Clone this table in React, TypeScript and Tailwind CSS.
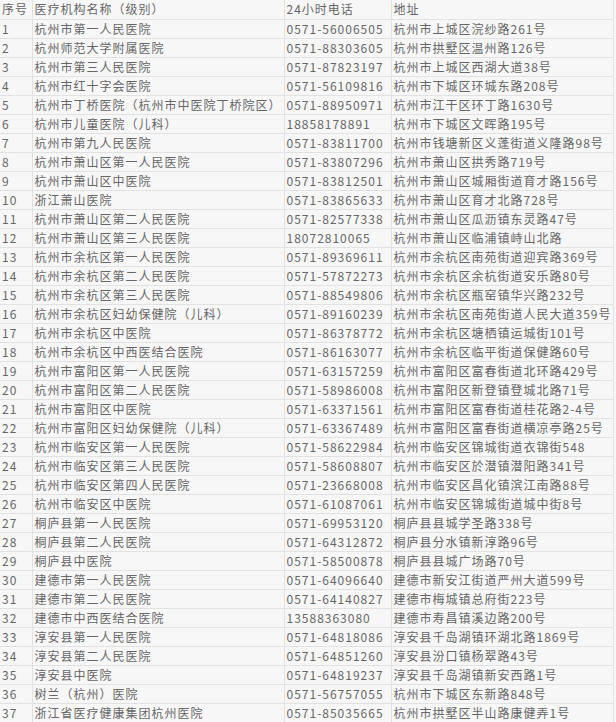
const ROWS: [string, string, string][] = [
  ["杭州市第一人民医院", "0571-56006505", "杭州市上城区浣纱路261号"],
  ["杭州师范大学附属医院", "0571-88303605", "杭州市拱墅区温州路126号"],
  ["杭州市第三人民医院", "0571-87823197", "杭州市上城区西湖大道38号"],
  ["杭州市红十字会医院", "0571-56109816", "杭州市下城区环城东路208号"],
  ["杭州市丁桥医院（杭州市中医院丁桥院区）", "0571-88950971", "杭州市江干区环丁路1630号"],
  ["杭州市儿童医院（儿科）", "18858178891", "杭州市下城区文晖路195号"],
  ["杭州市第九人民医院", "0571-83811700", "杭州市钱塘新区义蓬街道义隆路98号"],
  ["杭州市萧山区第一人民医院", "0571-83807296", "杭州市萧山区拱秀路719号"],
  ["杭州市萧山区中医院", "0571-83812501", "杭州市萧山区城厢街道育才路156号"],
  ["浙江萧山医院", "0571-83865633", "杭州市萧山区育才北路728号"],
  ["杭州市萧山区第二人民医院", "0571-82577338", "杭州市萧山区瓜沥镇东灵路47号"],
  ["杭州市萧山区第三人民医院", "18072810065", "杭州市萧山区临浦镇峙山北路"],
  ["杭州市余杭区第一人民医院", "0571-89369611", "杭州市余杭区南苑街道迎宾路369号"],
  ["杭州市余杭区第二人民医院", "0571-57872273", "杭州市余杭区余杭街道安乐路80号"],
  ["杭州市余杭区第三人民医院", "0571-88549806", "杭州市余杭区瓶窑镇华兴路232号"],
  ["杭州市余杭区妇幼保健院（儿科）", "0571-89160239", "杭州市余杭区南苑街道人民大道359号"],
  ["杭州市余杭区中医院", "0571-86378772", "杭州市余杭区塘栖镇运城街101号"],
  ["杭州市余杭区中西医结合医院", "0571-86163077", "杭州市余杭区临平街道保健路60号"],
  ["杭州市富阳区第一人民医院", "0571-63157259", "杭州市富阳区富春街道北环路429号"],
  ["杭州市富阳区第二人民医院", "0571-58986008", "杭州市富阳区新登镇登城北路71号"],
  ["杭州市富阳区中医院", "0571-63371561", "杭州市富阳区富春街道桂花路2-4号"],
  ["杭州市富阳区妇幼保健院（儿科）", "0571-63367489", "杭州市富阳区富春街道横凉亭路25号"],
  ["杭州市临安区第一人民医院", "0571-58622984", "杭州市临安区锦城街道衣锦街548"],
  ["杭州市临安区第三人民医院", "0571-58608807", "杭州市临安区於潜镇潜阳路341号"],
  ["杭州市临安区第四人民医院", "0571-23668008", "杭州市临安区昌化镇滨江南路88号"],
  ["杭州市临安区中医院", "0571-61087061", "杭州市临安区锦城街道城中街8号"],
  ["桐庐县第一人民医院", "0571-69953120", "桐庐县县城学圣路338号"],
  ["桐庐县第二人民医院", "0571-64312872", "桐庐县分水镇新淳路96号"],
  ["桐庐县中医院", "0571-58500878", "桐庐县县城广场路70号"],
  ["建德市第一人民医院", "0571-64096640", "建德市新安江街道严州大道599号"],
  ["建德市第二人民医院", "0571-64140827", "建德市梅城镇总府街223号"],
  ["建德市中西医结合医院", "13588363080", "建德市寿昌镇溪边路200号"],
  ["淳安县第一人民医院", "0571-64818086", "淳安县千岛湖镇环湖北路1869号"],
  ["淳安县第二人民医院", "0571-64851260", "淳安县汾口镇杨翠路43号"],
  ["淳安县中医院", "0571-64819237", "淳安县千岛湖镇新安西路1号"],
  ["树兰（杭州）医院", "0571-56757055", "杭州市下城区东新路848号"],
  ["浙江省医疗健康集团杭州医院", "0571-85035665", "杭州市拱墅区半山路康健弄1号"],
];

const cell = "h-[19px] border-b border-r border-[#e2e2e2] px-[2px] align-middle whitespace-nowrap overflow-hidden";

export default function App() {
  return (
    <div
      className="h-[722px] w-[616px] overflow-hidden bg-[#f7f7f7] text-[12px] leading-[18px] tracking-[1px] text-[#666]"
      style={{ fontFamily: '"Noto Sans CJK SC", "Noto Sans", sans-serif' }}
    >
      <table className="w-[613px] table-fixed border-collapse">
        <colgroup>
          <col className="w-[32px]" />
          <col className="w-[252px]" />
          <col className="w-[107px]" />
          <col className="w-[222px]" />
        </colgroup>
        <thead>
          <tr className="text-left">
            <th className={`${cell} font-normal`}>序号</th>
            <th className={`${cell} font-normal`}>医疗机构名称（级别）</th>
            <th className={`${cell} font-normal`}>24小时电话</th>
            <th className={`${cell} font-normal`}>地址</th>
          </tr>
        </thead>
        <tbody>
          {ROWS.map(([name, phone, addr], i) => (
            <tr key={i}>
              <td className={cell}>{i + 1}</td>
              <td className={cell}>{name}</td>
              <td className={cell}>{phone}</td>
              <td className={cell}>{addr}</td>
            </tr>
          ))}
        </tbody>
      </table>
    </div>
  );
}
